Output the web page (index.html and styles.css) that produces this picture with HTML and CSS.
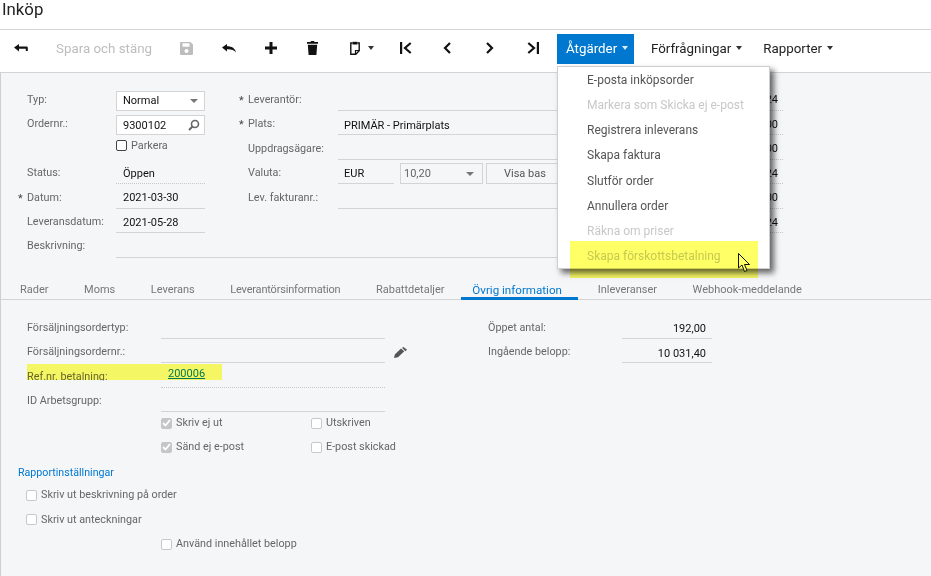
FILE: index.html
```html
<!DOCTYPE html>
<html lang="sv">
<head>
<meta charset="utf-8">
<title>Inköp</title>
<link rel="stylesheet" href="styles.css">
</head>
<body>
<header class="title">Inköp</header>
<nav class="toolbar">
  <span class="tool w42"><svg width="14" height="9" viewBox="0 0 14 9"><path d="M0 3.500 5 0v2.400h7.500a1.300 1.300 0 0 1 1.300 1.300V7h-2V4.700H5V7.500z" fill="#111"/></svg></span>
  <span class="tool save-text">Spara och stäng</span>
  <span class="tool w43"><svg width="13" height="13" viewBox="0 0 13 13"><path fill-rule="evenodd" d="M1 0h9.500L13 2.500V12a1 1 0 0 1-1 1H1a1 1 0 0 1-1-1V1a1 1 0 0 1 1-1zm1.500 1.200v3.600h7V1.200zm4 5.800a2 2 0 1 0 0 4 2 2 0 0 0 0-4z" fill="#bdbdbd"/></svg></span>
  <span class="tool w42"><svg width="14" height="9" viewBox="0 0 14 9"><path d="M0 3.500 5 0v2.200c5 0 8 2 9 6.300-1.800-2.600-4.600-3.400-9-3.300V7.500z" fill="#111"/></svg></span>
  <span class="tool w42"><svg width="12" height="12" viewBox="0 0 12 12"><path d="M4.500 0h3v4.500H12v3H7.500V12h-3V7.500H0v-3h4.500z" fill="#111"/></svg></span>
  <span class="tool w41"><svg width="11" height="14" viewBox="0 0 11 14"><path d="M4 0h3l.5 1H11v1.800H0V1h3.500zM.8 3.800h9.400L9.400 14H1.600z" fill="#111"/></svg></span>
  <span class="tool w52"><svg width="10" height="14" viewBox="0 0 10 14"><path d="M2.500 2H.8v11.200h5L9.200 9.800V2H7.500" fill="none" stroke="#111" stroke-width="1.400"/><path d="M2.500.8h5v2.700h-5z" fill="#111"/><path d="M5.500 13V9.500H9" fill="none" stroke="#111" stroke-width="1.200"/></svg><i class="caret dark"></i></span>
  <span class="tool w41"><svg width="12" height="12" viewBox="0 0 12 12"><path d="M1.100 0v12M10.700 1 5 6l5.700 5" fill="none" stroke="#111" stroke-width="2.200"/></svg></span>
  <span class="tool w42"><svg width="8" height="12" viewBox="0 0 8 12"><path d="M7 1 2 6l5 5" fill="none" stroke="#111" stroke-width="2.200"/></svg></span>
  <span class="tool w43"><svg width="8" height="12" viewBox="0 0 8 12"><path d="M1 1l5 5-5 5" fill="none" stroke="#111" stroke-width="2.200"/></svg></span>
  <span class="tool w43"><svg width="12" height="12" viewBox="0 0 12 12"><path d="M1.300 1 7 6l-5.700 5M10.900 0v12" fill="none" stroke="#111" stroke-width="2.200"/></svg></span>
  <span class="tool action">Åtgärder<i class="caret light"></i></span>
  <span class="tool menu-btn first">Förfrågningar<i class="caret dark"></i></span>
  <span class="tool menu-btn">Rapporter<i class="caret dark"></i></span>
</nav>

<main class="main">
  <section class="summary">
    <div class="col-a">
      <div class="row"><label class="lbl">Typ:</label><span class="box select">Normal<i class="caret grey"></i></span></div>
      <div class="row"><label class="lbl">Ordernr.:</label><span class="box">9300102<svg class="lens" width="12" height="12" viewBox="0 0 12 12"><circle cx="7" cy="5" r="3.500" fill="none" stroke="#666" stroke-width="1.600"/><path d="M4.500 7.500 1 11" stroke="#666" stroke-width="2"/></svg></span></div>
      <div class="row"><span class="spacer"></span><span class="check tall"><i class="cb dark"></i>Parkera</span></div>
      <div class="row"><label class="lbl">Status:</label><span class="val dotted">Öppen</span></div>
      <div class="row"><label class="lbl req">Datum:</label><span class="val">2021-03-30</span></div>
      <div class="row"><label class="lbl">Leveransdatum:</label><span class="val">2021-05-28</span></div>
    </div>
    <div class="col-b">
      <div class="row"><label class="lbl req">Leverantör:</label><span class="val wide"></span></div>
      <div class="row"><label class="lbl req">Plats:</label><span class="val wide">PRIMÄR - Primärplats</span></div>
      <div class="row"><label class="lbl">Uppdragsägare:</label><span class="val wide"></span></div>
      <div class="row"><label class="lbl">Valuta:</label><span class="val eur">EUR</span><span class="rate">10,20<i class="caret grey"></i></span><span class="base">Visa bas</span></div>
      <div class="row"><label class="lbl">Lev. fakturanr.:</label><span class="val wide"></span></div>
    </div>
    <div class="col-c">
      <div class="num">24</div><div class="num">00</div><div class="num">00</div><div class="num">24</div><div class="num">00</div><div class="num">24</div>
    </div>
    <div class="row desc"><label class="lbl">Beskrivning:</label><span class="val full"></span></div>
  </section>

  <div class="tabs">
    <span class="tab">Rader</span>
    <span class="tab">Moms</span>
    <span class="tab">Leverans</span>
    <span class="tab tight">Leverantörsinformation</span>
    <span class="tab">Rabattdetaljer</span>
    <span class="tab active">Övrig information</span>
    <span class="tab">Inleveranser</span>
    <span class="tab">Webhook-meddelande</span>
  </div>

  <section class="detail">
    <div class="detail-left">
      <div class="row"><label class="lbl l2">Försäljningsordertyp:</label><span class="val long"></span></div>
      <div class="row"><label class="lbl l2">Försäljningsordernr.:</label><span class="val long"></span><svg class="pencil" width="13" height="11" viewBox="0 0 13 11"><path d="M0 11 .8 7.500 7 1.500l3.300 2.800L4 10.200zM8 .8 9.500 0 13 2.800l-1.500 1.500z" fill="#555"/></svg></div>
      <div class="row"><label class="lbl l2 cut">Ref.nr. betalning:</label><span class="val long dotted"><a class="link" href="#">200006</a></span></div>
      <div class="row"><label class="lbl l2">ID Arbetsgrupp:</label><span class="val long"></span></div>
      <div class="checks"><span class="check c150"><i class="cb on"><svg width="9" height="8" viewBox="0 0 9 8"><path d="M1 4l2.500 2.500L8 1" fill="none" stroke="#fff" stroke-width="1.800"/></svg></i>Skriv ej ut</span><span class="check"><i class="cb"></i>Utskriven</span></div>
      <div class="checks"><span class="check c150"><i class="cb on"><svg width="9" height="8" viewBox="0 0 9 8"><path d="M1 4l2.500 2.500L8 1" fill="none" stroke="#fff" stroke-width="1.800"/></svg></i>Sänd ej e-post</span><span class="check"><i class="cb"></i>E-post skickad</span></div>
    </div>
    <div class="detail-right">
      <div class="row"><label class="lbl l3">Öppet antal:</label><span class="val amount">192,00</span></div>
      <div class="row"><label class="lbl l3">Ingående belopp:</label><span class="val amount">10 031,40</span></div>
    </div>
  </section>

  <section class="report">
    <h2 class="report-title">Rapportinställningar</h2>
    <div class="report-row"><span class="check"><i class="cb"></i>Skriv ut beskrivning på order</span></div>
    <div class="report-row"><span class="check"><i class="cb"></i>Skriv ut anteckningar</span></div>
    <div class="report-row indent"><span class="check"><i class="cb"></i>Använd innehållet belopp</span></div>
  </section>
</main>

<ul class="menu">
  <li>E-posta inköpsorder</li>
  <li class="off">Markera som Skicka ej e-post</li>
  <li>Registrera inleverans</li>
  <li>Skapa faktura</li>
  <li>Slutför order</li>
  <li>Annullera order</li>
  <li class="off">Räkna om priser</li>
  <li class="off">Skapa förskottsbetalning</li>
</ul>
<svg class="cursor" width="13" height="20" viewBox="0 0 13 20"><path d="M.5.500v14.500l3.500-3 2.500 6.500 2.500-1-2.500-6h5z" fill="#fff" stroke="#111"/></svg>
<div class="mark mark-menu"></div>
<div class="mark mark-ref"></div>
</body>
</html>
```
FILE: styles.css
```css
* { box-sizing: border-box; }
html, body { margin: 0; padding: 0; }
body {
  width: 931px; height: 576px; overflow: hidden; position: relative;
  background: #fff; color: #111;
  font-family: Roboto, "Liberation Sans", sans-serif; font-size: 11px;
}
.title { height: 30px; padding: 0 0 0 2px; font-size: 16.8px; line-height: 19px; color: #222; border-bottom: 1px solid #d4d4d6; }
.toolbar { height: 43px; display: flex; align-items: flex-start; padding-top: 4px; background: #fff; border-bottom: 1px solid #d4d4d6; }
.tool { display: flex; align-items: center; justify-content: center; height: 30px; padding-bottom: 2px; font-size: 13.33px; flex: none; }
.w41 { width: 41px; }
.w42 { width: 42px; }
.w43 { width: 43px; }
.w52 { width: 52px; gap: 8px; padding-left: 6px; }
.save-text { width: 123px; justify-content: flex-start; padding-left: 14px; color: #bdbdbd; }
.action { width: 77px; margin-left: 3px; background: #0078d0; color: #fff; gap: 5px; justify-content: flex-start; padding-left: 9px; }
.menu-btn { gap: 5px; color: #222; margin-left: 21px; }
.menu-btn.first { margin-left: 17px; }
.caret { display: inline-block; width: 0; height: 0; border-left: 3.5px solid transparent; border-right: 3.5px solid transparent; border-top: 4px solid #333; }
.caret.light { border-top-color: #d8ecfa; }
.caret.grey { border-top-color: #777; border-left-width: 4px; border-right-width: 4px; }

.main { height: 503px; background: #f5f6f8; border-left: 1px solid #cfcfd2; position: relative; }
.summary { display: grid; grid-template-columns: 221px 505px 30px; grid-template-rows: repeat(7, 24.5px); padding: 13px 0 0 26px; height: 200px; }
.col-a { grid-column: 1; grid-row: 1 / 7; }
.col-b { grid-column: 2; grid-row: 1 / 6; }
.col-c { grid-column: 3; grid-row: 1 / 7; }
.row { display: flex; height: 24.5px; align-items: flex-end; position: relative; }
.lbl { width: 89px; flex: none; color: #666; font-size: 10.8px; line-height: 14px; padding-bottom: 4px; position: relative; }
.col-b .lbl { width: 90px; }
.req::before { content: "*"; position: absolute; left: -9px; top: 1px; color: #444; }
.spacer { width: 89px; flex: none; }
.box { width: 89px; height: 20px; background: #fff; border: 1px solid #d4d4d6; display: flex; align-items: center; justify-content: space-between; padding: 0 6px; color: #111; }
.lens { margin-right: -2px; }
.val { display: block; width: 89px; height: 24.5px; border-bottom: 1px solid #d4d4d6; padding: 7px 0 0 7px; line-height: 14px; color: #111; }
.val.dotted { border-bottom: 1px dotted #c8c8cc; }
.wide { width: 222px; padding: 8px 0 0 6px; }
.eur { width: 56px; padding-left: 6px; }
.rate { width: 83px; height: 21px; margin-left: 6px; border: 1px solid #d4d4d6; display: flex; align-items: center; justify-content: space-between; padding: 0 8px 0 3px; color: #666; }
.base { width: 120px; height: 21px; margin-left: 3px; border: 1px solid #d4d4d6; display: flex; align-items: center; padding-left: 17px; color: #555; }
.check { display: inline-flex; align-items: center; gap: 4px; color: #666; font-size: 10.8px; line-height: 14px; }
.tall { height: 24.5px; padding-bottom: 3px; }
.cb { display: inline-flex; align-items: center; justify-content: center; width: 11px; height: 11px; border: 1px solid #c8c8cc; border-radius: 2px; background: #fff; flex: none; }
.cb.dark { border-color: #444; }
.cb.on { background: #c6c6c8; border-color: #c6c6c8; }
.num { height: 24.5px; border-bottom: 1px dotted #c8c8cc; padding: 7px 5px 0 0; text-align: right; line-height: 14px; color: #111; }
.desc { grid-column: 1 / 4; grid-row: 7; }
.desc .lbl { padding-bottom: 5px; }
.full { width: 600px; }

.tabs { display: flex; height: 27px; border-bottom: 1px solid #d4d4d6; align-items: flex-end; }
.tab { padding: 0 17.75px; color: #777; font-size: 11px; line-height: 14px; border-bottom: 3px solid transparent; margin-bottom: -1px; }
.tab:first-child { padding-left: 19px; }
.tab.tight { letter-spacing: -.19px; }
.tab.active { color: #0078d0; font-size: 11.6px; border-bottom-color: #0078d0; padding-left: 11px; padding-right: 16px; margin-left: -1px; margin-right: 2px; }

.detail { display: flex; padding: 14px 0 0 26px; }
.detail-left { width: 461px; }
.l2 { width: 134px; }
.long { width: 224px; padding-left: 7px; }
.pencil { position: absolute; left: 367px; top: 8px; }
.link { color: #0078d0; position: relative; top: -3px; }
.cut { clip-path: inset(0 0 7px 0); }
.checks { display: flex; height: 24px; padding-left: 134px; padding-bottom: 2px; align-items: center; }
.c150 { width: 150px; }
.l3 { width: 134px; }
.amount { width: 90px; padding: 8px 6px 0 0; text-align: right; }
.report { padding: 0 0 0 17px; }
.report-title { margin: 6px 0 0; font-size: 10.67px; font-weight: 400; color: #0078d0; line-height: 14px; }
.report-row { height: 24.5px; padding: 8px 0 0 8px; display: flex; align-items: flex-start; }
.report-row.indent { padding-left: 143px; }

.menu { list-style: none; margin: 0; padding: 1px 0 0; position: absolute; left: 557px; top: 66px; width: 213px; height: 203px; background: #fff; border: 1px solid #cfcfd2; box-shadow: 4px 4px 6px rgba(0,0,0,.6); }
.menu li { height: 25.15px; line-height: 25px; padding-left: 29px; font-size: 12px; color: #555; }
.menu li.off { color: #c8c8c8; }
.mark { position: absolute; background: #ffff66; mix-blend-mode: multiply; }
.mark-menu { left: 570px; top: 241px; width: 188px; height: 37px; }
.mark-ref { left: 27px; top: 364px; width: 195px; height: 16px; }
.cursor { position: absolute; left: 738px; top: 253px; }
```
